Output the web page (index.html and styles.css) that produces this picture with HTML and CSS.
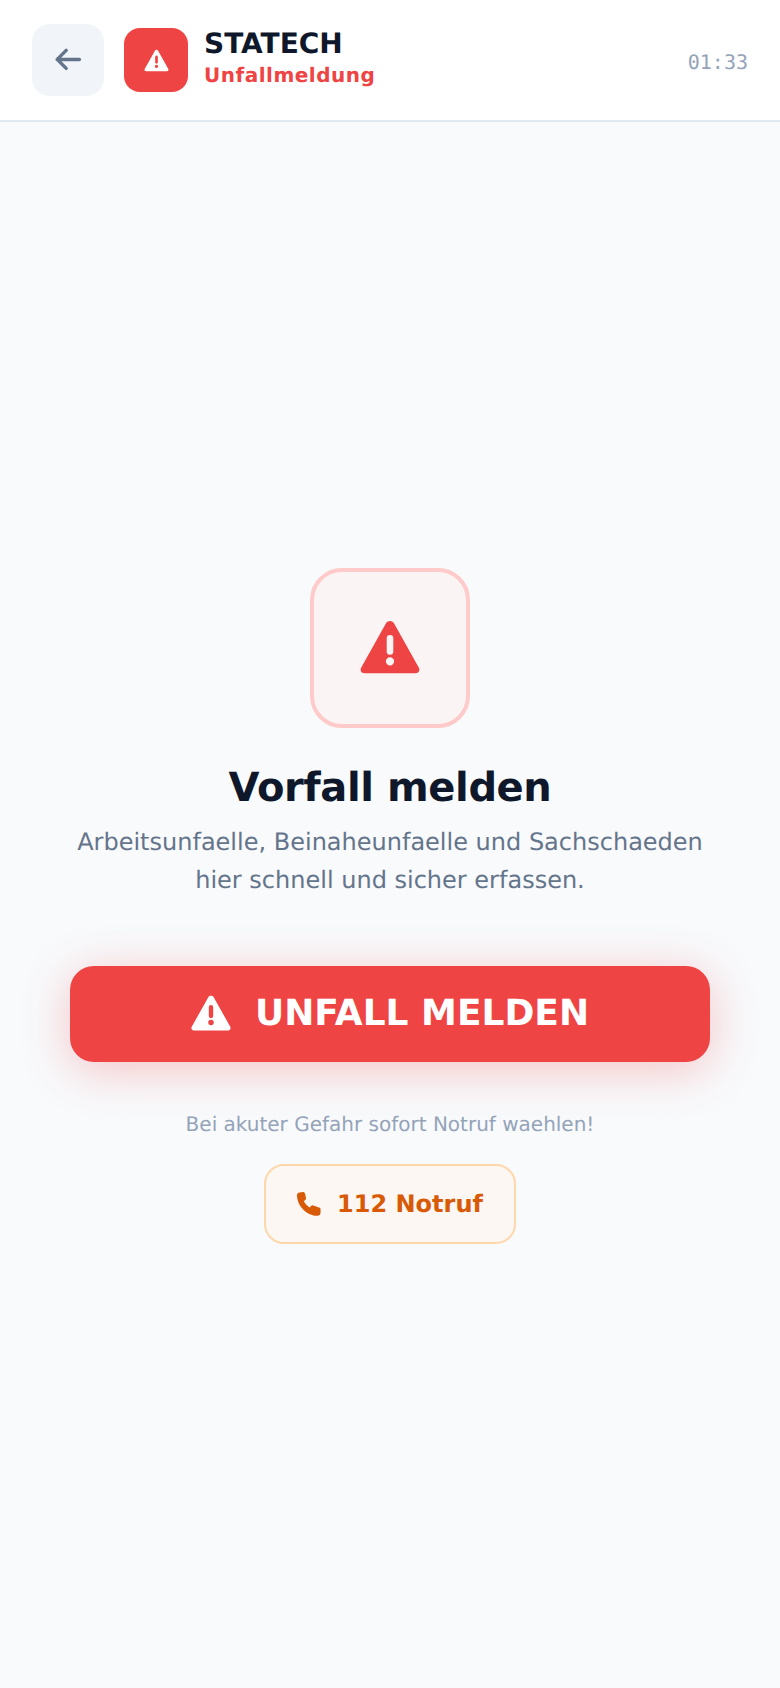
FILE: index.html

```html
<!DOCTYPE html>
<html lang="de">
<head>
  <meta charset="UTF-8" />
  <title>STATECH Unfallmeldung</title>
  <link rel="stylesheet" href="styles.css">
</head>
<body>
  <header class="topbar">
    <button class="back-btn" aria-label="Zurueck">
      <svg viewBox="0 0 24 24" class="back-icon"><path d="M19.6 11.6H4.8M10.8 5.6 4.8 11.6l6 6"/></svg>
    </button>
    <div class="logo">
      <svg viewBox="0 0 24 24" class="logo-icon"><path fill-rule="evenodd" d="M2.7 21.5h18.6c1.1 0 1.7-1.1 1.2-2L13.4 3.3c-.6-1-2.2-1-2.8 0L1.5 19.5c-.5.9.1 2 1.2 2zM10.8 8.8a1.2 1.2 0 0 1 2.4 0v4.8a1.2 1.2 0 0 1-2.4 0zM12 15.7a1.5 1.5 0 1 0 0 3 1.5 1.5 0 0 0 0-3z"/></svg>
    </div>
    <div class="brand">
      <div class="brand-name">STATECH</div>
      <div class="brand-sub">Unfallmeldung</div>
    </div>
    <div class="clock">01:33</div>
  </header>

  <main class="content">
    <div class="hero-icon">
      <svg viewBox="0 0 24 24" class="hero-svg"><path fill-rule="evenodd" d="M2.7 21.5h18.6c1.1 0 1.7-1.1 1.2-2L13.4 3.3c-.6-1-2.2-1-2.8 0L1.5 19.5c-.5.9.1 2 1.2 2zM10.8 8.8a1.2 1.2 0 0 1 2.4 0v4.8a1.2 1.2 0 0 1-2.4 0zM12 15.7a1.5 1.5 0 1 0 0 3 1.5 1.5 0 0 0 0-3z"/></svg>
    </div>
    <h1 class="title">Vorfall melden</h1>
    <p class="lead">Arbeitsunfaelle, Beinaheunfaelle und Sachschaeden<br>hier schnell und sicher erfassen.</p>
    <button class="report-btn">
      <svg viewBox="0 0 24 24" class="report-icon"><path fill-rule="evenodd" d="M2.7 21.5h18.6c1.1 0 1.7-1.1 1.2-2L13.4 3.3c-.6-1-2.2-1-2.8 0L1.5 19.5c-.5.9.1 2 1.2 2zM10.8 8.8a1.2 1.2 0 0 1 2.4 0v4.8a1.2 1.2 0 0 1-2.4 0zM12 15.7a1.5 1.5 0 1 0 0 3 1.5 1.5 0 0 0 0-3z"/></svg>
      UNFALL MELDEN
    </button>
    <p class="note">Bei akuter Gefahr sofort Notruf waehlen!</p>
    <button class="call-btn">
      <svg viewBox="0 0 24 24" class="call-icon"><path d="M2.5.5 6 0c1 0 1.5.5 2 1.5L9 6c.2 1-.2 1.6-1 2.2L6.8 9.2c1.3 2.6 3.4 4.8 6 6.2l1.2-1.3c.6-.7 1.3-.9 2.2-.6l5.8 2c1 .4 1.6 1 1.6 2l-.1 3.5c-.1 1.6-1.2 2.7-2.8 2.8C10 24 0 14 0 3.2 0 1.7 1 .7 2.5.5z"/></svg>
      112 Notruf
    </button>
  </main>
</body>
</html>
```

FILE: styles.css

```css
* {
  box-sizing: border-box;
}
html, body {
  height: 100%;
}
body {
  margin: 0;
  display: flex;
  flex-direction: column;
  font-family: "DejaVu Sans", sans-serif;
  text-rendering: geometricPrecision;
  background: #f8fafc;
}
button {
  font-family: inherit;
  text-rendering: inherit;
  border: none;
  cursor: pointer;
}
.topbar {
  display: flex;
  align-items: center;
  height: 122px;
  padding: 0 32px;
  background: #fff;
  border-bottom: 2px solid #e2e8f0;
}
.back-btn {
  display: flex;
  align-items: center;
  justify-content: center;
  width: 72px;
  height: 72px;
  padding: 0;
  margin-right: 20px;
  background: #f1f5f9;
  border-radius: 18px;
}
.back-icon {
  width: 36px;
  height: 36px;
  fill: none;
  stroke: #64748b;
  stroke-width: 2.3;
  stroke-linecap: round;
  stroke-linejoin: round;
}
.logo {
  display: flex;
  align-items: center;
  justify-content: center;
  width: 64px;
  height: 64px;
  margin-right: 16px;
  background: #ef4444;
  border-radius: 16px;
}
.logo-icon {
  width: 27px;
  height: 27px;
  fill: #fff;
}
.brand {
  flex: 1;
  margin-top: -6px;
}
.brand-name {
  font-size: 28px;
  line-height: 34px;
  font-weight: 700;
  color: #0f172a;
}
.brand-sub {
  margin-top: 1px;
  font-size: 20px;
  line-height: 26px;
  font-weight: 700;
  letter-spacing: 0.5px;
  color: #ef4444;
}
.clock {
  margin-top: 4px;
  font-family: "DejaVu Sans Mono", monospace;
  font-size: 20px;
  color: #94a3b8;
}
.content {
  flex: 1;
  display: flex;
  flex-direction: column;
  align-items: center;
  justify-content: center;
  padding: 2px 70px 0;
}
.hero-icon {
  display: flex;
  align-items: center;
  justify-content: center;
  width: 160px;
  height: 160px;
  margin-bottom: 36px;
  padding-bottom: 2px;
  background: #fbf4f4;
  border: 4px solid #fecaca;
  border-radius: 32px;
}
.hero-svg {
  width: 66px;
  height: 66px;
  fill: #ef4444;
}
.title {
  margin: 0 0 11px;
  font-size: 40px;
  line-height: 48px;
  font-weight: 700;
  letter-spacing: -0.4px;
  color: #0f172a;
}
.lead {
  margin: 0 0 67px;
  font-size: 24px;
  line-height: 38px;
  text-align: center;
  white-space: nowrap;
  color: #64748b;
}
.report-btn {
  display: flex;
  align-items: center;
  justify-content: center;
  gap: 22px;
  width: 640px;
  height: 96px;
  flex: none;
  margin-bottom: 50px;
  padding: 0 2px 2px 0;
  font-size: 36px;
  font-weight: 700;
  color: #fff;
  background: #ef4444;
  border-radius: 24px;
  box-shadow: 0 8px 48px rgba(239, 68, 68, 0.3);
}
.report-icon {
  width: 44px;
  height: 44px;
  fill: #fff;
}
.note {
  margin: 0 0 28px;
  font-size: 20px;
  line-height: 24px;
  color: #94a3b8;
}
.call-btn {
  display: flex;
  align-items: center;
  justify-content: center;
  gap: 16px;
  width: 252px;
  height: 80px;
  flex: none;
  font-size: 24px;
  font-weight: 700;
  color: #d95a06;
  background: #fcf7f3;
  border: 2px solid #fed7aa;
  border-radius: 20px;
}
.call-icon {
  width: 24px;
  height: 24px;
  fill: #d95a06;
}
```
